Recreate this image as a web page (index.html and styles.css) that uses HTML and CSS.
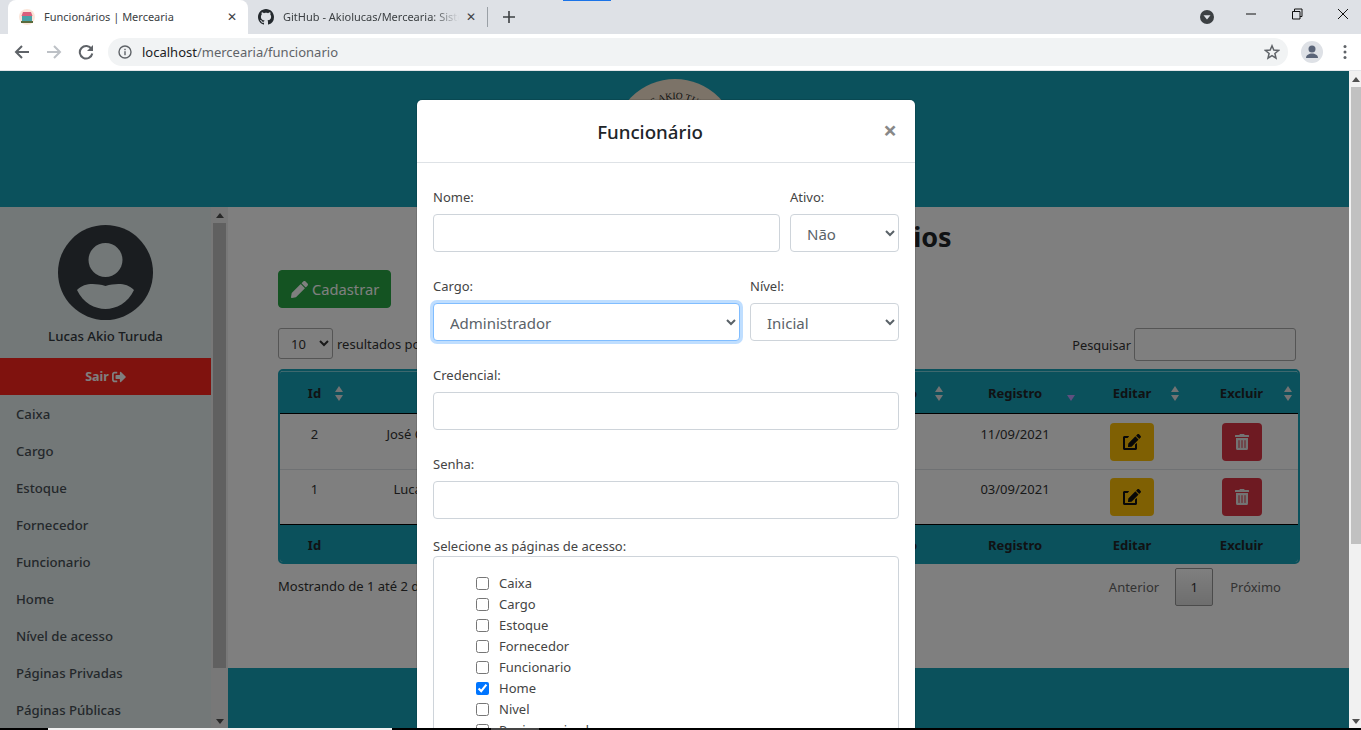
FILE: index.html
```html
<!DOCTYPE html>
<html lang="pt-BR">
<head>
<meta charset="utf-8">
<title>Funcionários | Mercearia</title>
<link rel="stylesheet" href="styles.css">
</head>
<body>
<div class="browser">
  <div class="tabstrip">
    <div class="tab tab-active">
      <svg class="favicon" viewBox="0 0 16 16"><circle cx="8" cy="8" r="8" fill="#fbe6da"/><path d="M4 3h8l1.500 4h-11z" fill="#d9607c"/><rect x="3" y="7" width="10" height="5" fill="#4aa3a8"/><rect x="2" y="12" width="12" height="2" fill="#5a6b3c"/></svg>
      <span class="tab-title">Funcionários | Mercearia</span>
      <span class="tab-x">✕</span>
    </div>
    <div class="tab tab-other">
      <svg class="favicon" viewBox="0 0 16 16"><path fill="#24292e" d="M8 0C3.58 0 0 3.58 0 8c0 3.54 2.29 6.53 5.47 7.59.4.07.55-.17.55-.38 0-.19-.01-.82-.01-1.49-2.01.37-2.53-.49-2.69-.94-.09-.23-.48-.94-.82-1.13-.28-.15-.68-.52-.01-.53.63-.01 1.08.58 1.23.82.72 1.21 1.87.87 2.33.66.07-.52.28-.87.51-1.07-1.78-.2-3.64-.89-3.64-3.95 0-.87.31-1.59.82-2.15-.08-.2-.36-1.02.08-2.12 0 0 .67-.21 2.2.82.64-.18 1.32-.27 2-.27.68 0 1.36.09 2 .27 1.53-1.04 2.2-.82 2.2-.82.44 1.1.16 1.92.08 2.12.51.56.82 1.27.82 2.15 0 3.07-1.87 3.75-3.65 3.95.29.25.54.73.54 1.48 0 1.07-.01 1.93-.01 2.2 0 .21.15.46.55.38A8.013 8.013 0 0016 8c0-4.42-3.58-8-8-8z"/></svg>
      <span class="tab-title tab-fade">GitHub - Akiolucas/Mercearia: Sistema</span>
      <span class="tab-x">✕</span>
    </div>
    <span class="tab-sep"></span>
    <svg class="newtab" viewBox="0 0 12 12"><path d="M6 0v12M0 6h12" stroke="#3c4043" stroke-width="1.6"/></svg>
    <span class="load-mark"></span>
    <span class="strip-fill"></span>
    <svg class="strip-drop" viewBox="0 0 14 14"><circle cx="7" cy="7" r="7" fill="#3c4043"/><path d="M3.500 5.200h7L7 9.600z" fill="#dee1e6"/></svg>
    <div class="winbtns">
      <svg class="winbtn" viewBox="-5 0 46 28"><path d="M18 14h10" stroke="#111" fill="none"/></svg>
      <svg class="winbtn" viewBox="-5 0 46 28"><path d="M18.500 11.500h7.500v7.500h-7.500zM20.500 11.500v-2.500h7.500v7.500h-2" stroke="#111" fill="none"/></svg>
      <svg class="winbtn" viewBox="-5 0 46 28"><path d="M18 9l10 10M28 9L18 19" stroke="#111" fill="none"/></svg>
    </div>
  </div>
  <div class="toolbar">
    <svg class="nav" viewBox="0 0 16 16"><path d="M15 8H2.500M8 2L2 8l6 6" fill="none" stroke="#5f6368" stroke-width="2"/></svg>
    <svg class="nav" viewBox="0 0 16 16"><path d="M1 8h12.500M8 2l6 6-6 6" fill="none" stroke="#bdc1c6" stroke-width="2"/></svg>
    <svg class="nav" viewBox="0 0 16 16"><path d="M13.500 5A6.300 6.300 0 1 0 14.300 9.500" fill="none" stroke="#5f6368" stroke-width="2"/><path d="M15 1v6H9z" fill="#5f6368"/></svg>
    <div class="omnibox">
      <svg class="info" viewBox="0 0 14 14"><circle cx="7" cy="7" r="6" fill="none" stroke="#5f6368" stroke-width="1.400"/><rect x="6.300" y="6.200" width="1.400" height="4" fill="#5f6368"/><rect x="6.300" y="3.800" width="1.400" height="1.400" fill="#5f6368"/></svg>
      <span class="url"><span class="url-host">localhost</span>/mercearia/funcionario</span>
      <svg class="star" viewBox="0 0 16 16"><path d="M8 1.800l1.800 4.300 4.700.4-3.600 3 1.100 4.600L8 11.700l-4 2.400 1.100-4.600-3.600-3 4.700-.4z" fill="none" stroke="#5f6368" stroke-width="1.500"/></svg>
    </div>
    <svg class="profile" viewBox="0 0 22 22"><circle cx="11" cy="11" r="11" fill="#dee1e6"/><circle cx="11" cy="8" r="3.500" fill="#5a6478"/><path d="M5 17c0-3 3-4.500 6-4.500s6 1.500 6 4.500z" fill="#5a6478"/></svg>
    <svg class="dots" viewBox="0 0 4 16"><circle cx="2" cy="2.500" r="1.500" fill="#5f6368"/><circle cx="2" cy="8" r="1.500" fill="#5f6368"/><circle cx="2" cy="13.500" r="1.500" fill="#5f6368"/></svg>
  </div>

  <div class="viewport">
    <div class="page">
      <header class="site-header">
        <svg class="logo" viewBox="0 0 124 124">
          <defs><path id="logo-arc" d="M20 62a42 42 0 0 1 84 0"/></defs>
          <circle cx="62" cy="62" r="62" fill="#f8e6d0"/>
          <text class="logo-text"><textPath href="#logo-arc" startOffset="50%" text-anchor="middle">LUCAS AKIO TURUDA</textPath></text>
        </svg>
      </header>
      <div class="site-body">
        <aside class="sidebar">
          <div class="side-scroll">
            <svg class="avatar" viewBox="0 0 95 95"><circle cx="47.500" cy="47.500" r="47.500" fill="#343a40"/><circle cx="47.500" cy="35" r="17" fill="#e6f0f0"/><path d="M19 65C26 58 36 58 47.500 61 59 58 69 58 76 65 70 78 58 84 47.500 84 37 84 25 78 19 65Z" fill="#e6f0f0"/></svg>
            <p class="user-name">Lucas Akio Turuda</p>
            <a class="logout">Sair
              <svg class="logout-icon" viewBox="0 0 512 512"><path fill="currentColor" d="M497 273L329 441c-15 15-41 4.500-41-17v-96H152c-13.300 0-24-10.700-24-24v-96c0-13.300 10.700-24 24-24h136V88c0-21.400 25.900-32 41-17l168 168c9.300 9.400 9.300 24.600 0 34zM192 436v-40c0-6.600-5.400-12-12-12H96c-17.700 0-32-14.300-32-32V160c0-17.700 14.300-32 32-32h84c6.600 0 12-5.400 12-12V76c0-6.600-5.400-12-12-12H96c-53 0-96 43-96 96v192c0 53 43 96 96 96h84c6.600 0 12-5.400 12-12z"/></svg>
            </a>
            <nav class="side-nav">
              <a>Caixa</a><a>Cargo</a><a>Estoque</a><a>Fornecedor</a><a>Funcionario</a><a>Home</a><a>Nível de acesso</a><a>Páginas Privadas</a><a>Páginas Públicas</a>
            </nav>
          </div>
          <div class="scrollbar side-bar">
            <span class="arrow-up"></span><span class="side-thumb"></span><span class="arrow-down"></span>
          </div>
        </aside>
        <div class="main-col">
          <main class="main">
            <h1 class="page-title">Relação de Funcionários</h1>
            <button class="btn-new">
              <svg class="pencil" viewBox="0 0 512 512"><path fill="currentColor" d="M497.900 142.100l-46.100 46.100c-4.700 4.700-12.300 4.700-17 0l-111-111c-4.700-4.700-4.700-12.300 0-17l46.100-46.100c18.700-18.700 49.100-18.700 67.900 0l60.100 60.100c18.800 18.700 18.800 49.100 0 67.900zM284.200 99.800L21.600 362.400.4 483.900c-2.900 16.400 11.400 30.600 27.800 27.800l121.500-21.300 262.600-262.600c4.700-4.700 4.700-12.300 0-17l-111-111c-4.800-4.700-12.400-4.700-17.100 0z"/></svg>
              Cadastrar
            </button>
            <div class="dt-top">
              <label class="dt-length"><select class="dt-select"><option>10</option></select> resultados por página</label>
              <label class="dt-search">Pesquisar <input class="dt-input" type="text"></label>
            </div>
            <div class="table-wrap">
              <table class="data">
                <colgroup><col class="c-id"><col class="c-nome"><col class="c-cargo"><col class="c-cred"><col class="c-nivel"><col class="c-ativo"><col class="c-reg"><col class="c-edit"><col class="c-del"></colgroup>
                <thead>
                  <tr><th>Id<i class="sort"></i></th><th>Nome<i class="sort"></i></th><th>Cargo<i class="sort"></i></th><th>Credencial<i class="sort"></i></th><th>Nível<i class="sort"></i></th><th>Ativo<i class="sort"></i></th><th>Registro<i class="sort sort-desc"></i></th><th>Editar<i class="sort"></i></th><th>Excluir<i class="sort"></i></th></tr>
                </thead>
                <tbody>
                  <tr><td>2</td><td>José Carlos de Souza</td><td>Caixa</td><td>jose</td><td>Inicial</td><td>Sim</td><td>11/09/2021</td>
                    <td><button class="act act-edit"><svg viewBox="0 0 576 512"><use href="#i-edit"/></svg></button></td>
                    <td><button class="act act-del"><svg viewBox="0 0 448 512"><use href="#i-trash"/></svg></button></td></tr>
                  <tr><td>1</td><td>Lucas Akio Turuda</td><td>Administrador</td><td>lucas</td><td>Total</td><td>Sim</td><td>03/09/2021</td>
                    <td><button class="act act-edit"><svg viewBox="0 0 576 512"><use href="#i-edit"/></svg></button></td>
                    <td><button class="act act-del"><svg viewBox="0 0 448 512"><use href="#i-trash"/></svg></button></td></tr>
                </tbody>
                <tfoot>
                  <tr><th>Id</th><th>Nome</th><th>Cargo</th><th>Credencial</th><th>Nível</th><th>Ativo</th><th>Registro</th><th>Editar</th><th>Excluir</th></tr>
                </tfoot>
              </table>
            </div>
            <div class="dt-bottom">
              <span class="dt-info">Mostrando de 1 até 2 de 2 registros</span>
              <div class="pager"><a>Anterior</a><span class="page-cur">1</span><a>Próximo</a></div>
            </div>
          </main>
          <footer class="site-footer"></footer>
        </div>
      </div>

      <div class="backdrop">
        <div class="modal">
          <div class="modal-head">
            <h2 class="modal-title">Funcionário</h2>
            <span class="modal-close">×</span>
          </div>
          <form class="modal-body">
            <div class="row">
              <div class="field grow"><label>Nome:</label><input class="ctl" type="text"></div>
              <div class="field w-ativo"><label>Ativo:</label><select class="ctl sel"><option>Não</option></select></div>
            </div>
            <div class="row">
              <div class="field grow"><label>Cargo:</label><select class="ctl sel focus"><option>Administrador</option></select></div>
              <div class="field w-nivel"><label>Nível:</label><select class="ctl sel"><option>Inicial</option></select></div>
            </div>
            <div class="row"><div class="field grow"><label>Credencial:</label><input class="ctl" type="text"></div></div>
            <div class="row row-last"><div class="field grow"><label>Senha:</label><input class="ctl" type="text"></div></div>
            <div class="pages-label">Selecione as páginas de acesso:</div>
            <div class="pages-box">
              <label class="check"><input type="checkbox">Caixa</label>
              <label class="check"><input type="checkbox">Cargo</label>
              <label class="check"><input type="checkbox">Estoque</label>
              <label class="check"><input type="checkbox">Fornecedor</label>
              <label class="check"><input type="checkbox">Funcionario</label>
              <label class="check"><input type="checkbox" checked>Home</label>
              <label class="check"><input type="checkbox">Nivel</label>
              <label class="check"><input type="checkbox">Paginas privadas</label>
              <label class="check"><input type="checkbox">Paginas publicas</label>
            </div>
          </form>
        </div>
      </div>
    </div>
    <div class="scrollbar page-bar">
      <span class="arrow-up"></span><span class="page-thumb"></span><span class="arrow-down"></span>
    </div>
  </div>
  <div class="taskbar"><span class="tb-white"></span><span class="tb-grey"></span></div>
</div>
<svg class="defs" aria-hidden="true">
  <symbol id="i-edit" viewBox="0 0 576 512"><path fill="currentColor" d="M402.600 83.200l90.200 90.200c3.800 3.800 3.800 10 0 13.800L274.400 405.600l-92.800 10.300c-12.400 1.400-22.900-9.100-21.500-21.500l10.300-92.800L388.800 83.200c3.800-3.800 10-3.800 13.800 0zm162-22.900l-48.800-48.800c-15.200-15.200-39.900-15.200-55.200 0l-35.400 35.400c-3.800 3.800-3.800 10 0 13.800l90.200 90.200c3.800 3.800 10 3.800 13.800 0l35.400-35.400c15.200-15.300 15.200-40 0-55.200zM384 346.200V448H64V128h73.100c3.200 0 6.200-1.300 8.500-3.500l40-40c7.600-7.600 2.200-20.500-8.500-20.500H48C21.500 64 0 85.500 0 112v352c0 26.500 21.500 48 48 48h352c26.500 0 48-21.500 48-48V306.200c0-10.700-12.900-16-20.500-8.500l-40 40c-2.200 2.300-3.500 5.300-3.500 8.500z"/></symbol>
  <symbol id="i-trash" viewBox="0 0 448 512"><path fill="currentColor" d="M32 464a48 48 0 0 0 48 48h288a48 48 0 0 0 48-48V128H32zm272-256a16 16 0 0 1 32 0v224a16 16 0 0 1-32 0zm-96 0a16 16 0 0 1 32 0v224a16 16 0 0 1-32 0zm-96 0a16 16 0 0 1 32 0v224a16 16 0 0 1-32 0zM432 32H312l-9.400-18.700A24 24 0 0 0 281.100 0H166.800a23.720 23.720 0 0 0-21.400 13.300L136 32H16A16 16 0 0 0 0 48v32a16 16 0 0 0 16 16h416a16 16 0 0 0 16-16V48a16 16 0 0 0-16-16z"/></symbol>
</svg>
</body>
</html>
```

FILE: styles.css
```css
* { box-sizing: border-box; }
html, body { margin: 0; height: 100%; overflow: hidden; }
body { font-family: "Noto Sans", sans-serif; font-size: 13px; color: #212529; background: #fff; }
.defs { display: none; }

.browser { display: flex; flex-direction: column; height: 730px; overflow: hidden; }

/* tab strip */
.tabstrip { position: relative; display: flex; align-items: stretch; height: 34px; background: #dee1e6; padding-left: 8px; flex: none; }
.tab { display: flex; align-items: center; height: 34px; font-size: 11px; color: #3c4043; }
.tab-active { width: 240px; background: #fff; border-radius: 8px 8px 0 0; padding: 0 10px 0 11px; }
.tab-other { width: 239px; padding: 0 10px 0 10px; }
.favicon { width: 16px; height: 16px; flex: none; margin-right: 9px; }
.tab-title { flex: 1; white-space: nowrap; overflow: hidden; margin-top: -1px; }
.tab-fade { -webkit-mask-image: linear-gradient(90deg, #000 85%, transparent); mask-image: linear-gradient(90deg, #000 85%, transparent); }
.tab-x { flex: none; width: 12px; font-size: 12px; line-height: 12px; text-align: center; color: #3c4043; margin-left: 6px; }
.tab-sep { width: 1px; height: 20px; background: #9aa0a6; align-self: center; margin-right: 15px; }
.newtab { width: 12px; height: 12px; align-self: center; }
.load-mark { position: absolute; left: 563px; top: 0; width: 48px; height: 1px; background: #1a73e8; }
.strip-fill { flex: 1; }
.strip-drop { width: 14px; height: 14px; align-self: center; margin-right: 9px; }
.winbtns { display: flex; align-items: flex-start; }
.winbtn { width: 46px; height: 28px; }

/* toolbar */
.toolbar { display: flex; align-items: center; height: 37px; background: #fff; border-bottom: 1px solid #e3e5e8; flex: none; padding: 0 0 1px 14px; }
.nav { width: 16px; height: 16px; margin-right: 16px; flex: none; }
.omnibox { flex: none; width: 1180px; height: 28px; margin-left: -2px; border-radius: 14px; background: #f1f3f4; display: flex; align-items: center; padding: 0 8px 0 10px; }
.info { width: 14px; height: 14px; flex: none; margin-right: 10px; }
.url { flex: 1; font-size: 13px; color: #5f6368; white-space: nowrap; }
.url-host { color: #202124; }
.star { width: 16px; height: 16px; flex: none; }
.profile { width: 22px; height: 22px; margin-left: 13px; flex: none; }
.dots { width: 4px; height: 16px; margin-left: 20px; flex: none; }

/* page */
.viewport { position: relative; flex: 1; min-height: 0; display: flex; overflow: hidden; }
.page { position: relative; flex: 1; min-width: 0; display: flex; flex-direction: column; overflow: hidden; }
.site-header { flex: none; height: 136px; background: #17a2b8; display: flex; justify-content: center; padding-top: 8px; overflow: hidden; }
.logo { width: 124px; height: 124px; flex: none; }
.logo-text { font-family: "Liberation Serif", serif; font-size: 9.500px; fill: #222; }
.site-body { flex: 1; min-height: 0; display: flex; }

.sidebar { width: 228px; flex: none; display: flex; overflow: hidden; background: #e6f0f0; }
.side-scroll { flex: 1; padding-top: 18px; text-align: center; overflow: hidden; }
.avatar { display: block; width: 95px; height: 95px; margin: 0 auto; }
.user-name { margin: 6px 0 12px; font-size: 13.200px; line-height: 20px; font-weight: 500; color: #343a40; }
.logout { display: flex; align-items: center; justify-content: center; gap: 3px; height: 37px; background: #ff241c; color: #fff; font-size: 12.500px; font-weight: 700; }
.logout-icon { width: 14px; height: 14px; }
.side-nav { display: flex; flex-direction: column; text-align: left; }
.side-nav a { display: flex; align-items: center; height: 37px; padding-left: 16px; font-size: 13.200px; font-weight: 500; color: #495057; }

.scrollbar { position: relative; flex: none; display: flex; flex-direction: column; align-items: center; background: #f1f1f1; }
.side-bar { width: 17px; padding: 0 2px; }
.page-bar { width: 12px; padding: 0 0 0 2px; }
.arrow-up { flex: none; width: 0; height: 0; margin: 6px 0 5px; border: 4px solid transparent; border-top: 0; border-bottom: 5px solid #505050; }
.arrow-down { flex: none; width: 0; height: 0; margin: auto 0 4px; border: 4px solid transparent; border-bottom: 0; border-top: 5px solid #505050; }
.side-thumb { flex: none; width: 100%; height: 445px; background: #c1c1c1; }
.page-thumb { flex: none; width: 100%; height: 457px; background: #c1c1c1; }

.main-col { flex: 1; min-width: 0; display: flex; flex-direction: column; background: #fff; }
.main { flex: 1; min-height: 0; padding: 0 49px 0 50px; overflow: hidden; }
.page-title { margin: 12px 0 15px; font-size: 27px; line-height: 36px; font-weight: 700; text-align: center; color: #212529; }
.btn-new { display: flex; align-items: center; gap: 4px; height: 38px; width: 113px; padding: 0 12px; background: #28a745; border: 1px solid #28a745; border-radius: 4px; color: #fff; font: inherit; font-size: 14.700px; }
.pencil { width: 17px; height: 17px; flex: none; }
.dt-top { display: flex; justify-content: space-between; align-items: flex-start; margin-top: 20px; height: 41px; padding-right: 4px; }
.dt-length, .dt-search { display: flex; align-items: center; gap: 4px; color: #333; font-size: 13px; white-space: nowrap; }
.dt-select { width: 55px; height: 31px; padding: 0 0 0 8px; border: 1px solid #aaa; border-radius: 3px; background: #fff; font: inherit; font-size: 13px; color: #333; }
.dt-search { gap: 3px; font-size: 12.800px; }
.dt-input { width: 162px; height: 33px; border: 1px solid #aaa; border-radius: 3px; background: transparent; }
.table-wrap { border: 2px solid #17a2b8; border-radius: 5px; overflow: hidden; width: 1022px; }
.data { width: 1018px; table-layout: fixed; border-collapse: collapse; font-size: 13px; }
.c-id { width: 69px; } .c-nome { width: 200px; } .c-cargo { width: 110px; } .c-cred { width: 110px; } .c-nivel { width: 82px; }
.c-ativo { width: 98px; } .c-reg { width: 132px; } .c-edit { width: 102px; } .c-del { width: 115px; }
.data th { position: relative; background: #17a2b8; font-weight: 700; text-align: center; color: #212529; white-space: nowrap; overflow: hidden; }
.data thead th { height: 42px; border-top: 1px solid #7cd0dc; border-bottom: 1px solid #000; padding: 1px 0 0; }
.data tfoot th { height: 37px; border-top: 1px solid #000; padding: 4px 0 0; }
.data td { height: 55px; padding: 10px 0 0; vertical-align: top; text-align: center; color: #333; white-space: nowrap; overflow: hidden; border-top: 1px solid #dee2e6; }
.data tbody tr:first-child td { height: 56px; padding-top: 11px; border-top: 0; }
.data th:last-child, .data td:last-child { padding-left: 2px; }
.sort { position: absolute; right: 6px; top: 14px; width: 8px; height: 15px; }
.data th:nth-child(8) .sort { right: 4px; }
.sort::before, .sort::after { content: ""; position: absolute; left: 0; border: 4px solid transparent; }
.sort::before { top: 0; border-top: 0; border-bottom: 6px solid #e6e6e6; }
.sort::after { bottom: 0; border-bottom: 0; border-top: 6px solid #e6e6e6; }
.sort-desc::before { display: none; }
.sort-desc::after { border-top-color: #be9fff; }
.act { display: inline-flex; align-items: center; justify-content: center; height: 38px; border: 0; border-radius: 4px; padding: 0; margin-top: -2px; }
.act svg { height: 16px; width: 18px; }
.act-edit { width: 44px; background: #ffc107; color: #111; }
.act-del { width: 40px; background: #dc3545; color: #e6e6e6; }
.dt-bottom { display: flex; justify-content: space-between; align-items: flex-start; padding-right: 19px; margin-top: 4px; }
.dt-info { font-size: 13px; color: #333; line-height: 36px; }
.pager { display: flex; align-items: center; font-size: 13px; color: #666; height: 38px; }
.page-cur { display: flex; align-items: center; justify-content: center; width: 38px; height: 38px; margin: 0 17px 0 16px; border: 1px solid #979797; border-radius: 2px; background: linear-gradient(#fff, #dcdcdc); color: #333; }
.site-footer { flex: none; height: 60px; background: #17a2b8; }

/* modal */
.backdrop { position: absolute; inset: 0; background: rgba(0,0,0,.5); display: flex; justify-content: center; align-items: flex-start; padding: 29px 17px 0 0; overflow: hidden; }
.modal { width: 498px; flex: none; background: #fff; border-radius: 5px; box-shadow: 0 0 0 1px rgba(0,0,0,.1); }
.modal-head { display: flex; align-items: center; height: 63px; padding: 0 16px; border-bottom: 1px solid #dee2e6; }
.modal-title { flex: 1; margin: 0; padding-top: 1px; font-size: 18.700px; font-weight: 500; text-align: center; color: #212529; }
.modal-close { width: 32px; text-align: right; font-size: 24px; line-height: 24px; font-weight: 700; color: #888; padding: 0 2px 2px 0; }
.modal-body { padding: 24px 16px 0; }
.row { display: flex; gap: 10px; margin-bottom: 24px; }
.row-last { margin-bottom: 18px; }
.field { display: flex; flex-direction: column; }
.field label { display: block; font-size: 13px; line-height: 21px; margin-bottom: 6px; color: #444; }
.grow { flex: 1; min-width: 0; }
.w-ativo { width: 109px; }
.w-nivel { width: 149px; }
.ctl { display: block; width: 100%; height: 38px; border: 1px solid #ced4da; border-radius: 4px; background: #fff; font: inherit; font-size: 15px; color: #495057; padding: 0 12px; }
.sel { padding-top: 2px; color: #5a6268; }
.focus { border-color: #80bdff; box-shadow: 0 0 0 3px rgba(0,123,255,.25); }
.pages-label { font-size: 13px; line-height: 19px; color: #444; }
.pages-box { border: 1px solid #ced4da; border-radius: 4px; padding: 15px 0 8px 42px; }
.check { display: flex; align-items: center; height: 21px; font-size: 13px; color: #444; }
.check input { width: 13px; height: 13px; margin: 1px 10px 0 0; }

.taskbar { flex: none; position: relative; display: flex; height: 2px; background: #000; }
.tb-white { width: 344px; margin-left: 48px; background: #f1f1f1; }
.tb-grey { width: 48px; margin-left: 99px; background: #444; }
```
